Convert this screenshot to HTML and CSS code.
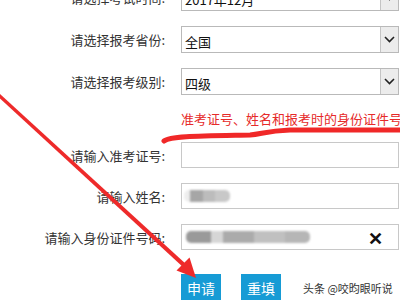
FILE: index.html
```html
<!DOCTYPE html>
<html lang="zh-CN">
<head>
  <meta charset="UTF-8">
  <title>成绩查询</title>
  <link rel="stylesheet" href="styles.css">
</head>
<body>
  <div class="form">
    <label class="label">请选择考试时间:</label>
    <div class="select"><span class="value">2017年12月</span><span class="drop"><svg width="11" height="7" viewBox="0 0 11 7"><path d="M1 1l4.5 4.5L10 1" fill="none" stroke="#222" stroke-width="1.6"/></svg></span></div>

    <label class="label">请选择报考省份:</label>
    <div class="select"><span class="value">全国</span><span class="drop"><svg width="11" height="7" viewBox="0 0 11 7"><path d="M1 1l4.5 4.5L10 1" fill="none" stroke="#222" stroke-width="1.6"/></svg></span></div>

    <label class="label">请选择报考级别:</label>
    <div class="select"><span class="value">四级</span><span class="drop"><svg width="11" height="7" viewBox="0 0 11 7"><path d="M1 1l4.5 4.5L10 1" fill="none" stroke="#222" stroke-width="1.6"/></svg></span></div>

    <span></span>
    <p class="hint">准考证号、姓名和报考时的身份证件号码必须一致</p>

    <label class="label">请输入准考证号:</label>
    <div class="input"></div>

    <label class="label">请输入姓名:</label>
    <div class="input">
      <span class="blur blur-name"></span>
    </div>

    <label class="label">请输入身份证件号码:</label>
    <div class="input">
      <span class="blur blur-id"></span>
      <span class="clear">✕</span>
    </div>

    <span></span>
    <div class="actions">
      <button class="btn">申请</button>
      <button class="btn">重填</button>
      <span class="mark">头条 @咬昀眼听说</span>
    </div>
  </div>

  <!-- red annotations drawn over the screenshot -->
  <svg class="marks" width="400" height="300" viewBox="0 0 400 300">
    <path d="M164 141 C170 136 200 136 250 135 C262 134 266 131 290 130 L400 130" fill="none" stroke="#f02828" stroke-width="5" stroke-linecap="round"/>
    <polygon points="0,94 0,98.5 184,268 187,265" fill="#ee2a2a"/>
    <polygon points="196,278 176.5,270.5 189.5,257.5" fill="#ee2a2a"/>
  </svg>
</body>
</html>
```

FILE: styles.css
```css
body {
  margin: 0;
  width: 400px;
  height: 300px;
  overflow: hidden;
  position: relative;
  background: #fff;
  color: #333;
  font-family: "Noto Sans CJK SC", "Liberation Sans", sans-serif;
  font-size: 13px;
}
.form {
  display: grid;
  grid-template-columns: 165px 218px;
  grid-template-rows: 27px 27px 27px 17px 26px 26px 26px 28px;
  column-gap: 16px;
  row-gap: 15px;
  margin-top: -16px;
  align-items: center;
}
.label {
  text-align: right;
  white-space: nowrap;
}
.select {
  height: 27px;
  box-sizing: border-box;
  border: 1px solid #b9b9b9;
  display: flex;
  align-items: center;
  background: #fff;
}
.value {
  flex: 1;
  padding-left: 3px;
  color: #111;
  padding-top: 4px;
}
.drop {
  width: 17px;
  height: 25px;
  border-left: 1px solid #c4c4c4;
  background: #ececec;
  display: flex;
  align-items: center;
  justify-content: center;
}
.hint {
  margin: 0;
  color: #e62a2a;
  white-space: nowrap;
}
.input {
  height: 26px;
  box-sizing: border-box;
  border: 1px solid #c8c8c8;
  position: relative;
  display: flex;
  align-items: center;
}
.blur {
  display: block;
  height: 12px;
  filter: blur(1px);
  border-radius: 5px;
}
.blur-name {
  width: 46px;
  margin-left: 2px;
  background: linear-gradient(90deg, #ededed 0 13%, #a6a6a6 13% 42%, #bcbcbc 42% 68%, #c8c8c8 68% 100%);
}
.blur-id {
  width: 124px;
  margin-left: 4px;
  background: linear-gradient(90deg, #9a9a9a 0 20%, #d6d6d6 20% 30%, #ababab 30% 55%, #c0c0c0 55% 80%, #b6b6b6 80% 100%);
}
.clear {
  margin-left: auto;
  margin-right: 15px;
  font-size: 18px;
  font-weight: bold;
  color: #111;
  line-height: 1;
}
.actions {
  display: flex;
  align-items: center;
  gap: 20px;
  align-self: start;
  margin-top: 9px;
}
.btn {
  flex-shrink: 0;
  white-space: nowrap;
  height: 28px;
  padding: 0 6px;
  border: none;
  background: #169bd5;
  color: #fff;
  font-family: inherit;
  font-size: 14px;
}
.mark {
  flex-shrink: 0;
  margin-left: 2px;
  font-size: 11px;
  color: #333;
  white-space: nowrap;
}
.marks {
  position: absolute;
  left: 0;
  top: 0;
}
```
